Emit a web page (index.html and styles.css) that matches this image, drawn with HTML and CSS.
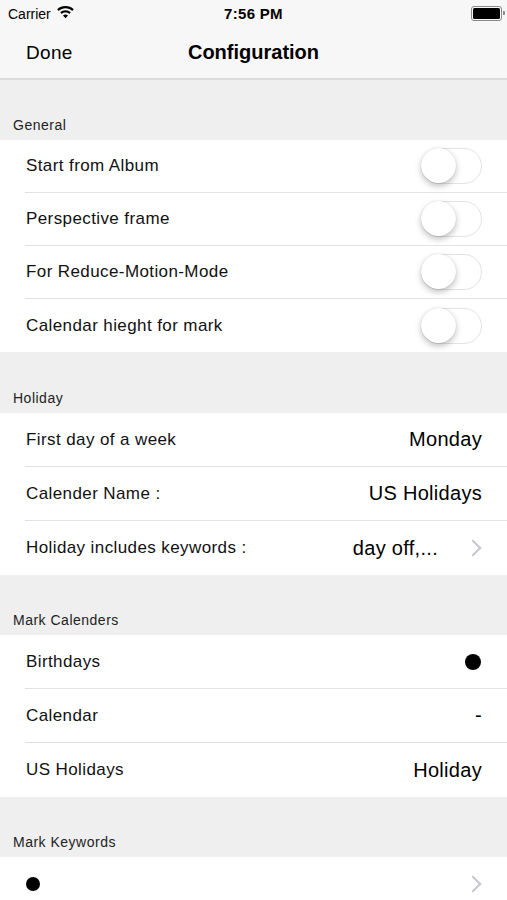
FILE: index.html
```html
<!DOCTYPE html>
<html lang="en">
<head>
    <meta charset="UTF-8">
    <meta name="viewport" content="width=device-width, initial-scale=1.0">
    <title>Configuration</title>
    <link rel="stylesheet" href="styles.css">
</head>
<body>
    <div class="statusbar">
        <div class="carrier">Carrier
            <svg class="wifi" width="17" height="13" viewBox="0 0 17 13">
                <path d="M8.5 0C5.3 0 2.4 1.2 0.2 3.2l1.6 1.7C3.6 3.3 5.9 2.3 8.5 2.3s4.9 1 6.7 2.6l1.6-1.7C14.6 1.2 11.7 0 8.5 0z" fill="#000"/>
                <path d="M8.5 4.3c-2 0-3.9 0.8-5.3 2l1.6 1.7c1-0.9 2.3-1.4 3.7-1.4s2.7 0.5 3.7 1.4l1.6-1.7c-1.4-1.2-3.3-2-5.3-2z" fill="#000"/>
                <path d="M8.5 8.5c-1 0-1.8 0.3-2.5 0.9L8.5 12.2 11 9.4c-0.7-0.6-1.5-0.9-2.5-0.9z" fill="#000"/>
            </svg>
        </div>
        <div class="time">7:56 PM</div>
        <div class="battery"><span class="battery-fill"></span></div>
    </div>

    <div class="navbar">
        <span class="nav-done">Done</span>
        <span class="nav-title">Configuration</span>
    </div>

    <div class="section-header">General</div>
    <div class="group">
        <div class="row small"><span class="label">Start from Album</span><span class="switch"></span></div>
        <div class="row small"><span class="label">Perspective frame</span><span class="switch"></span></div>
        <div class="row small"><span class="label">For Reduce-Motion-Mode</span><span class="switch"></span></div>
        <div class="row small"><span class="label">Calendar hieght for mark</span><span class="switch"></span></div>
    </div>

    <div class="section-header tall">Holiday</div>
    <div class="group">
        <div class="row"><span class="label">First day of a week</span><span class="value">Monday</span></div>
        <div class="row"><span class="label">Calender Name :</span><span class="value">US Holidays</span></div>
        <div class="row"><span class="label">Holiday includes keywords :</span><span class="value more">day off,...</span><span class="chevron"></span></div>
    </div>

    <div class="section-header">Mark Calenders</div>
    <div class="group">
        <div class="row"><span class="label">Birthdays</span><span class="dot"></span></div>
        <div class="row"><span class="label">Calendar</span><span class="value">-</span></div>
        <div class="row"><span class="label">US Holidays</span><span class="value">Holiday</span></div>
    </div>

    <div class="section-header">Mark Keywords</div>
    <div class="group">
        <div class="row"><span class="dot left"></span><span class="chevron"></span></div>
    </div>
</body>
</html>
```

FILE: styles.css
```css
body { margin: 0; background: #efefef; font-family: "Liberation Sans", Arial, sans-serif; color: #000; overflow: hidden; }

.statusbar { height: 27px; background: #f7f7f7; display: flex; align-items: center; justify-content: space-between; padding: 0 5px 0 8px; position: relative; }
.carrier { font-size: 14px; display: flex; align-items: center; gap: 6px; }
.wifi { margin-top: -2px; }
.time { position: absolute; left: 0; right: 0; text-align: center; font-size: 15px; font-weight: bold; letter-spacing: 0.3px; }
.battery { width: 27px; height: 11px; border: 1.5px solid #888; border-radius: 3px; padding: 1px; position: relative; margin-top: -1px; }
.battery::after { content: ""; position: absolute; right: -4px; top: 4px; width: 2px; height: 4px; background: #888; border-radius: 0 1px 1px 0; }
.battery-fill { display: block; height: 100%; background: #000; border-radius: 1.5px; }

.navbar { height: 51px; background: #f7f7f7; border-bottom: 2px solid #dcdcdc; display: flex; align-items: center; position: relative; }
.nav-done { font-size: 19px; margin-left: 26px; letter-spacing: 0.3px; }
.nav-title { position: absolute; left: 0; right: 0; text-align: center; font-size: 20px; font-weight: bold; }

.section-header { height: 60px; display: flex; align-items: flex-end; padding: 0 0 7px 13px; box-sizing: border-box; font-size: 14px; letter-spacing: 0.5px; color: #222; }
.section-header.tall { height: 61px; }

.group { background: #fff; }
.row { height: 54px; display: flex; align-items: center; margin-left: 25px; padding-right: 25px; border-bottom: 1px solid #e2e2e2; box-sizing: border-box; }
.row.small { height: 53px; }
.row:last-child { border-bottom: none; }
.label { font-size: 17px; letter-spacing: 0.4px; padding-left: 1px; flex: 1; color: #111; }
.value { font-size: 20px; letter-spacing: 0.3px; }
.value.more { margin-right: 29px; }

.switch { width: 61px; height: 36px; border: 1.5px solid #e3e3e3; border-radius: 19px; box-sizing: border-box; position: relative; }
.switch::after { content: ""; position: absolute; left: -1px; top: -1px; width: 35px; height: 35px; border-radius: 50%; background: #fff; box-shadow: 0 3px 6px rgba(0,0,0,0.25), 0 0 1px rgba(0,0,0,0.2); }

.chevron { width: 10px; height: 10px; border-right: 2px solid #c7c7cc; border-top: 2px solid #c7c7cc; transform: rotate(45deg); margin-right: 3px; }
.dot { width: 16px; height: 16px; border-radius: 50%; background: #000; margin-right: 1px; }
.dot.left { width: 14px; height: 14px; margin-left: 1px; flex: none; margin-right: auto; }
```
